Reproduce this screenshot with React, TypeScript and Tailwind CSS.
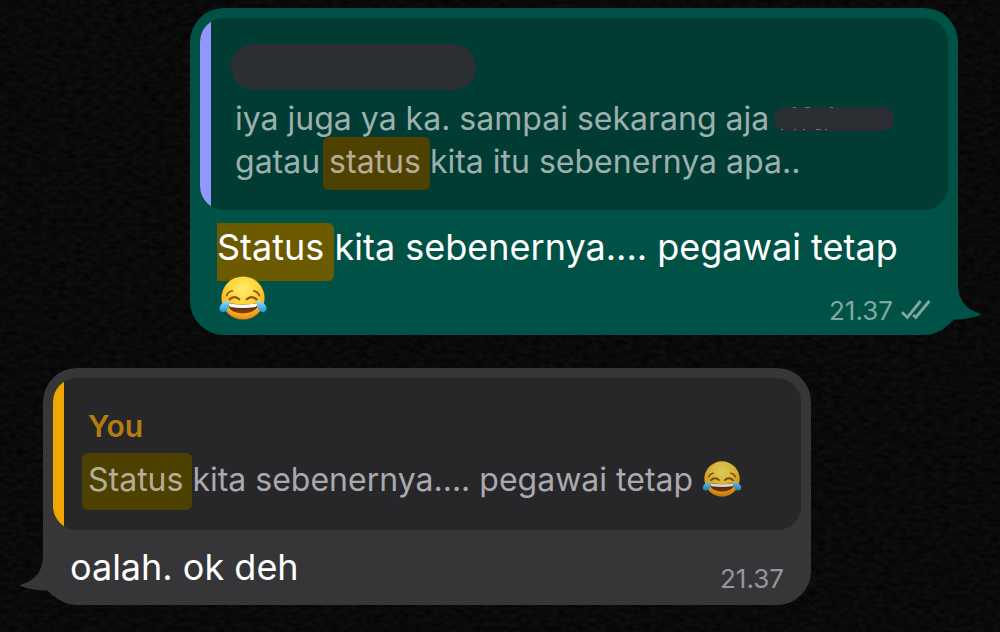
import type { ReactNode } from "react";

function JoyEmoji({ className, id }: { className: string; id: string }) {
  return (
    <svg viewBox="0 0 48 44" role="img" aria-label="Face with tears of joy" className={className}>
      <defs>
        <radialGradient id={`${id}-face`} cx="0.5" cy="0.3" r="0.72">
          <stop offset="0" stopColor="#ffec70" />
          <stop offset="0.45" stopColor="#ffd53b" />
          <stop offset="0.8" stopColor="#faae22" />
          <stop offset="1" stopColor="#e2780c" />
        </radialGradient>
        <linearGradient id={`${id}-tear`} x1="0" y1="0" x2="0" y2="1">
          <stop offset="0" stopColor="#8fe3ff" />
          <stop offset="1" stopColor="#1e96dc" />
        </linearGradient>
        <linearGradient id={`${id}-mouth`} x1="0" y1="0" x2="0" y2="1">
          <stop offset="0" stopColor="#4a2308" />
          <stop offset="1" stopColor="#8a3f10" />
        </linearGradient>
      </defs>
      <circle cx="24" cy="22" r="21.6" fill={`url(#${id}-face)`} />
      <g fill="none" stroke="#8a5310" strokeLinecap="round">
        <path d="M7.6 19.6C8.6 17 10.6 15.4 13.4 14.8" strokeWidth="1.6" />
        <path d="M40.4 19.6C39.4 17 37.4 15.4 34.6 14.8" strokeWidth="1.6" />
        <path d="M10.6 23.4C13.6 20.2 17.6 20.6 20.2 23.2" strokeWidth="2.3" />
        <path d="M37.4 23.4C34.4 20.2 30.4 20.6 27.8 23.2" strokeWidth="2.3" />
      </g>
      <path d="M8.6 27C18.5 28.8 29.5 28.8 39.4 27C38.6 34.2 32.4 37.4 24 37.4S9.4 34.2 8.6 27Z" fill={`url(#${id}-mouth)`} />
      <path d="M9.2 27.2C18.7 28.9 29.3 28.9 38.8 27.2C38.5 28.9 37.8 30.1 36.6 31C28.6 32.2 19.4 32.2 11.4 31C10.2 30.1 9.5 28.9 9.2 27.2Z" fill="#fffdf6" />
      <path d="M9.4 24.6C5.2 25.8 1.4 28 0.6 31.6C0 34.8 2.8 37 5.8 35.8C9.6 34.2 10.6 29.4 9.4 24.6Z" fill={`url(#${id}-tear)`} />
      <path d="M38.6 24.6C42.8 25.8 46.6 28 47.4 31.6C48 34.8 45.2 37 42.2 35.8C38.4 34.2 37.4 29.4 38.6 24.6Z" fill={`url(#${id}-tear)`} />
    </svg>
  );
}

function ReadTicks() {
  return (
    <svg viewBox="0 0 30 20" aria-label="Delivered" role="img" className="mb-[2px] h-5 w-[30px]">
      <g fill="none" stroke="#80a8a1" strokeWidth="2.8" strokeLinecap="butt" strokeLinejoin="miter">
        <path d="M1 12.2L6.4 17.4L19.6 1" />
        <path d="M12.2 15L14.8 17.4L28.4 1" />
      </g>
    </svg>
  );
}

function PaperTexture() {
  return (
    <svg aria-hidden="true" className="absolute inset-0 -z-10 h-full w-full">
      <filter id="paper" x="0" y="0" width="100%" height="100%" colorInterpolationFilters="sRGB">
        <feTurbulence type="fractalNoise" baseFrequency="0.12 0.22" numOctaves="4" seed="21" />
        <feColorMatrix values="0.07 0 0 0 0.003  0.07 0 0 0 0.003  0.07 0 0 0 0.004  0 0 0 0 1" />
      </filter>
      <rect width="100%" height="100%" filter="url(#paper)" />
    </svg>
  );
}

function Redacted() {
  return (
    <span className="relative -ml-1 inline-block h-6 w-[120px] rounded-full bg-[#2b2f33] align-[-1px]">
      <svg aria-hidden="true" viewBox="0 0 120 24" className="absolute inset-0 h-full w-full">
        <g fill="#5f7775">
          <rect x="19" y="0" width="3" height="1" />
          <rect x="31" y="0" width="5" height="1" />
          <rect x="56" y="0" width="3" height="1" />
          <rect x="7" y="22" width="2" height="1" />
          <rect x="20" y="22" width="2" height="1" />
          <rect x="29" y="22" width="2" height="1" />
          <rect x="42" y="22" width="5" height="1" />
          <rect x="51" y="22" width="2" height="1" />
        </g>
      </svg>
    </span>
  );
}

function Quote({ accent, surface, children }: { accent: string; surface: string; children: ReactNode }) {
  return (
    <blockquote className={`flex overflow-hidden rounded-3xl text-[32px] leading-[43px] ${surface}`}>
      <div className={`w-[11px] shrink-0 ${accent}`} />
      <div className="min-w-0 flex-1 pr-4 pl-6">{children}</div>
    </blockquote>
  );
}

export default function App() {
  return (
    <main className="relative isolate flex min-h-screen flex-col gap-[33px] overflow-hidden bg-[#0b0b0c] py-2 pr-[42px] pl-[43px] font-['Inter',sans-serif]">
      <PaperTexture />

      <article className="relative w-full max-w-[768px] self-end rounded-[34px] bg-[#015246] p-[10px] text-white">
        <svg aria-hidden="true" viewBox="0 0 60 50" className="absolute -right-6 bottom-0 -z-10 h-[50px] w-[60px]">
          <path d="M36 0C36 14 44 25 58 28.5C59 29 59 30 58 30.3C50 33 40 35 32 34.5C24 43 14 48 2 49V0Z" fill="#015246" />
        </svg>
        <Quote accent="bg-[#9298fb]" surface="bg-[#013c34] text-[#9cb0ae]">
          <div className="pt-[26px] pb-[27px]">
            <div className="-ml-1 h-[46px] w-[245px] rounded-full bg-[#2b2f33]" />
            <p className="mt-[7px]">
              iya juga ya ka. sampai sekarang aja <Redacted />
              <br />
              gatau{" "}
              <mark className="-ml-[6px] rounded-md bg-[#4f4200] pt-[5px] pb-[9px] pl-[6px] text-[#b5ac9a]">status </mark>
              kita itu sebenernya apa..
            </p>
          </div>
        </Quote>
        <div className="grid px-[17px] pt-[11px]">
          <p className="col-start-1 row-start-1 text-4xl leading-[52px]">
            <mark className="rounded-r-md bg-[#6c5a00] pt-[2px] pb-[12px] text-white">Status </mark>
            kita sebenernya.... pegawai tetap{" "}
            <JoyEmoji id="joy-large" className="relative ml-0.5 inline-block h-11 w-12 align-[-8px]" />
          </p>
          <div className="col-start-1 row-start-1 flex items-center gap-2 self-end justify-self-end text-[26px] leading-7 text-[#80a8a1]">
            <time>21.37</time>
            <ReadTicks />
          </div>
        </div>
      </article>

      <article className="relative w-full max-w-[768px] rounded-[34px] bg-[#363638] p-[10px] pb-3 text-white">
        <svg aria-hidden="true" viewBox="0 0 60 50" className="absolute bottom-0 -left-6 -z-10 h-[50px] w-[60px]">
          <path d="M24 0C24 16 16 26 2 29.5C1 30 1 31 2 31.3C10 34 20 36 28 35.5C36 43 46 48 58 49V0Z" fill="#363638" />
        </svg>
        <Quote accent="bg-[#f0a500]" surface="bg-[#272729] text-[#a9a9ae]">
          <div className="pt-[28px] pb-[29px]">
            <p className="text-[30px] leading-10 font-semibold text-[#b57d0d]">You</p>
            <p className="mt-3">
              <mark className="-ml-[6px] rounded-md bg-[#4c4100] pt-[7px] pb-[11px] pl-[6px] text-[#b5ac9a]">Status </mark>
              kita sebenernya.... pegawai tetap{" "}
              <JoyEmoji id="joy-small" className="inline-block h-9 w-10 align-[-6px] brightness-[.85]" />
            </p>
          </div>
        </Quote>
        <div className="grid px-[17px] pt-[11px]">
          <p className="col-start-1 row-start-1 text-4xl leading-[52px]">oalah. ok deh</p>
          <time className="col-start-1 row-start-1 self-end justify-self-end text-[26px] leading-7 text-[#96969b]">21.37</time>
        </div>
      </article>
    </main>
  );
}
